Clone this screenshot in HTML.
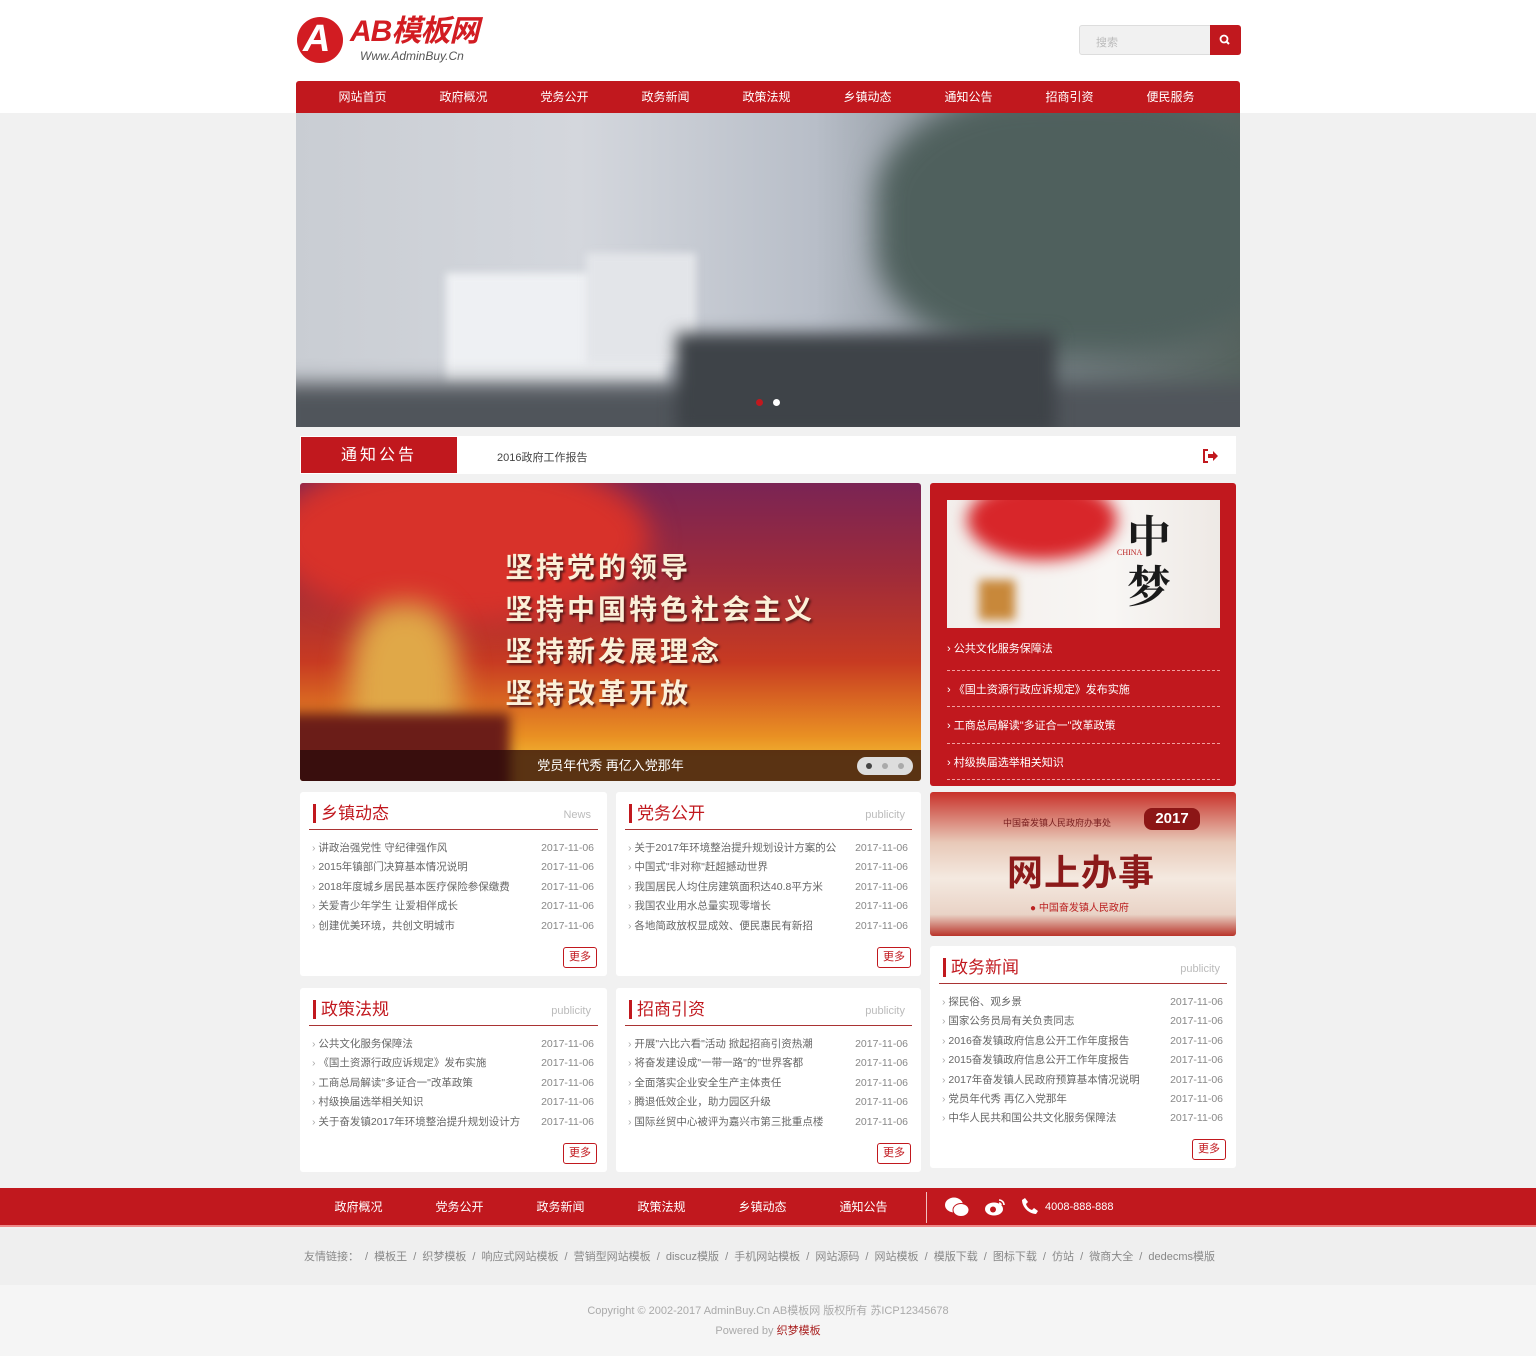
<!DOCTYPE html>
<html><head><meta charset="utf-8">
<style>
*{margin:0;padding:0;box-sizing:border-box}
body{width:1536px;height:1356px;background:#f1f1f1;font-family:"Liberation Sans","Noto Sans CJK SC",sans-serif;position:relative;overflow:hidden;color:#555}
.abs{position:absolute}
.hdr{left:0;top:0;width:1536px;height:113px;background:#fff}
.nav{left:296px;top:81px;width:944px;height:32px;background:#c1181e;border-radius:3px 3px 0 0;display:flex;padding-left:16px}
.nav span{width:101px;text-align:center;color:#fff;font-size:12px;line-height:32px}
.card{background:#fff;border-radius:3px}
.ttl{position:absolute;left:13px;top:12px;font-size:17px;color:#c1181e;border-left:3px solid #c1181e;padding-left:5px;line-height:19px}
.en{position:absolute;right:16px;top:17px;font-size:11px;color:#bbb}
.ul{position:absolute;left:9px;right:9px;top:37px;border-top:1px solid #a33}
.list{position:absolute;left:12px;right:13px;top:47px;font-size:10.5px;color:#666}
.list div{height:19.4px;line-height:19.4px;display:flex;justify-content:space-between;white-space:nowrap;overflow:hidden}
.list div b{font-weight:normal;overflow:hidden}
.list div b:before{content:"› ";color:#aaa}
.list div i{font-style:normal;color:#888;margin-left:6px}
.more{position:absolute;right:10px;bottom:8px;width:34px;height:21px;border:1px solid #c1181e;border-radius:3px;color:#c1181e;font-size:11px;text-align:center;line-height:19px}
.bl{position:absolute;filter:blur(14px)}
</style></head><body>
<div class="abs hdr"></div>
<!-- logo -->
<div class="abs" style="left:297px;top:17px;width:46px;height:46px;border-radius:50%;background:#d21c22"></div>
<div class="abs" style="left:303px;top:14px;color:#fff;font-size:38px;font-weight:bold;font-style:italic;line-height:50px">A</div>
<div class="abs" style="left:350px;top:14px;color:#d21c22;font-size:30px;font-weight:bold;font-style:italic;line-height:36px;letter-spacing:-1px">AB模板网</div>
<div class="abs" style="left:360px;top:49px;color:#555;font-size:12px;font-style:italic">Www.AdminBuy.Cn</div>
<div class="abs" style="left:1079px;top:25px;width:132px;height:30px;background:#f1f1f1;border:1px solid #ddd;border-radius:3px 0 0 3px;font-size:11px;color:#bbb;padding:8px 16px">搜索</div>
<div class="abs" style="left:1210px;top:25px;width:31px;height:30px;background:#c1181e;border-radius:0 3px 3px 0"><svg width="31" height="30"><circle cx="14" cy="14" r="3.5" stroke="#fff" stroke-width="1.8" fill="none"/><line x1="16.5" y1="16.5" x2="19" y2="19" stroke="#fff" stroke-width="2"/></svg></div>
<div class="abs nav"><span>网站首页</span><span>政府概况</span><span>党务公开</span><span>政务新闻</span><span>政策法规</span><span>乡镇动态</span><span>通知公告</span><span>招商引资</span><span>便民服务</span></div>
<!-- banner -->
<div class="abs" style="left:296px;top:113px;width:944px;height:314px;overflow:hidden;background:linear-gradient(90deg,#c9cdd3 0%,#d4d7dd 30%,#b8bec8 55%,#7a848a 75%,#56635f 100%)">
 <div class="bl" style="left:580px;top:-20px;width:400px;height:260px;background:#4f605d;border-radius:40%"></div>
 <div class="bl" style="left:150px;top:160px;width:220px;height:110px;background:#eef0f3;filter:blur(4px)"></div>
 <div class="bl" style="left:290px;top:140px;width:110px;height:110px;background:#e3e5e9;filter:blur(4px)"></div>
 <div class="bl" style="left:-20px;top:270px;width:1000px;height:70px;background:#50555b;filter:blur(10px)"></div>
 <div class="bl" style="left:380px;top:220px;width:380px;height:100px;background:#3e4348;filter:blur(8px)"></div>
 <div class="abs" style="left:460px;top:286px;width:7px;height:7px;border-radius:50%;background:#c1181e"></div>
 <div class="abs" style="left:477px;top:286px;width:7px;height:7px;border-radius:50%;background:#fff"></div>
</div>
<!-- notice -->
<div class="abs" style="left:300px;top:436px;width:936px;height:38px;background:#fff"></div>
<div class="abs" style="left:301px;top:437px;width:156px;height:36px;background:#c1181e;color:#fff;font-size:16px;line-height:38px;text-align:center;letter-spacing:3px">通知公告</div>
<div class="abs" style="left:497px;top:449px;font-size:11px;color:#444">2016政府工作报告</div>
<div class="abs" style="left:1201px;top:448px"><svg width="18" height="16"><path d="M7 2H3v12h4" stroke="#c1181e" stroke-width="2" fill="none"/><path d="M7 6h5V3l5 5-5 5v-3H7z" fill="#c1181e"/></svg></div>
<!-- big image -->
<div class="abs" style="left:300px;top:483px;width:621px;height:298px;border-radius:3px;overflow:hidden;background:linear-gradient(180deg,#7a2454 0%,#9e2b3a 30%,#c73a22 60%,#e99023 85%,#f0b030 92%)">
 <div class="bl" style="left:-30px;top:-30px;width:380px;height:170px;background:#d8322a;border-radius:50%"></div>
 <div class="bl" style="left:50px;top:120px;width:110px;height:180px;background:#e0a848;border-radius:40%"></div>
 <div class="bl" style="left:-20px;top:230px;width:230px;height:90px;background:#6b1d18;filter:blur(6px)"></div>
 <div class="abs" style="left:205px;top:64px;color:#fbf0d8;font-size:28px;font-weight:bold;line-height:42px;letter-spacing:3px;text-shadow:2px 2px 2px #5a1a1a">坚持党的领导<br>坚持中国特色社会主义<br>坚持新发展理念<br>坚持改革开放</div>
 <div class="abs" style="left:0;top:267px;width:621px;height:31px;background:rgba(40,10,10,0.75);color:#fff;font-size:13px;line-height:31px;text-align:center">党员年代秀 再亿入党那年</div>
 <div class="abs" style="left:557px;top:274px;width:56px;height:18px;border-radius:9px;background:#ddd"></div>
 <div class="abs" style="left:566px;top:280px;width:6px;height:6px;border-radius:50%;background:#444"></div>
 <div class="abs" style="left:582px;top:280px;width:6px;height:6px;border-radius:50%;background:#aaa"></div>
 <div class="abs" style="left:598px;top:280px;width:6px;height:6px;border-radius:50%;background:#aaa"></div>
</div>
<!-- right red box -->
<div class="abs" style="left:930px;top:483px;width:306px;height:303px;background:#c1181e;border-radius:3px">
 <div class="abs" style="left:17px;top:17px;width:273px;height:128px;background:linear-gradient(90deg,#f3efec 0%,#f8f6f4 60%,#eee9e5 100%);overflow:hidden">
  <div class="bl" style="left:20px;top:-20px;width:150px;height:80px;border-radius:50%;background:#d8262a;filter:blur(8px)"></div>
  <div class="bl" style="left:32px;top:80px;width:36px;height:40px;background:#c8883a;filter:blur(5px)"></div>
  <div class="abs" style="left:180px;top:8px;font-size:44px;line-height:50px;font-weight:bold;color:#1a1a1a;font-family:'Noto Serif CJK SC',serif">中<br>梦</div>
  <div class="abs" style="left:170px;top:48px;font-size:8px;color:#b22;font-family:'Liberation Serif',serif">CHINA</div>
 </div>
 <div class="abs" style="left:17px;top:151px;width:273px;font-size:11px;color:#fff">
  <div style="height:36.5px;line-height:30px;border-bottom:1px dashed #f0a0a0">› 公共文化服务保障法</div>
  <div style="height:36.5px;line-height:38px;border-bottom:1px dashed #f0a0a0">› 《国土资源行政应诉规定》发布实施</div>
  <div style="height:36.5px;line-height:38px;border-bottom:1px dashed #f0a0a0">› 工商总局解读"多证合一"改革政策</div>
  <div style="height:36.5px;line-height:38px;border-bottom:1px dashed #f0a0a0">› 村级换届选举相关知识</div>
 </div>
</div>
<!-- 网上办事 -->
<div class="abs" style="left:930px;top:792px;width:306px;height:144px;border-radius:3px;overflow:hidden;background:linear-gradient(180deg,#c8322a 0%,#e8c9b8 35%,#f4e9e0 60%,#e9d3c6 85%,#b9342a 100%)">
 <div class="abs" style="left:214px;top:16px;width:56px;height:22px;border-radius:8px;background:#8c1616;color:#fff;font-weight:bold;font-size:15px;line-height:22px;text-align:center">2017</div>
 <div class="abs" style="left:73px;top:24px;font-size:9px;color:#7a2020">中国奋发镇人民政府办事处</div>
 <div class="abs" style="left:77px;top:52px;font-size:36px;font-weight:bold;color:#8c1a1a;letter-spacing:1px">网上办事</div>
 <div class="abs" style="left:100px;top:107px;font-size:10px;color:#b22">● 中国奋发镇人民政府</div>
</div>
<!-- cards -->
<div class="abs card" style="left:300px;top:792px;width:307px;height:184px">
 <div class="ttl">乡镇动态</div><div class="en">News</div><div class="ul"></div>
 <div class="list"><div><b>讲政治强党性 守纪律强作风</b><i>2017-11-06</i></div><div><b>2015年镇部门决算基本情况说明</b><i>2017-11-06</i></div><div><b>2018年度城乡居民基本医疗保险参保缴费</b><i>2017-11-06</i></div><div><b>关爱青少年学生 让爱相伴成长</b><i>2017-11-06</i></div><div><b>创建优美环境，共创文明城市</b><i>2017-11-06</i></div></div>
 <div class="more">更多</div>
</div>
<div class="abs card" style="left:616px;top:792px;width:305px;height:184px">
 <div class="ttl">党务公开</div><div class="en">publicity</div><div class="ul"></div>
 <div class="list"><div><b>关于2017年环境整治提升规划设计方案的公</b><i>2017-11-06</i></div><div><b>中国式"非对称"赶超撼动世界</b><i>2017-11-06</i></div><div><b>我国居民人均住房建筑面积达40.8平方米</b><i>2017-11-06</i></div><div><b>我国农业用水总量实现零增长</b><i>2017-11-06</i></div><div><b>各地简政放权显成效、便民惠民有新招</b><i>2017-11-06</i></div></div>
 <div class="more">更多</div>
</div>
<div class="abs card" style="left:300px;top:988px;width:307px;height:184px">
 <div class="ttl">政策法规</div><div class="en">publicity</div><div class="ul"></div>
 <div class="list"><div><b>公共文化服务保障法</b><i>2017-11-06</i></div><div><b>《国土资源行政应诉规定》发布实施</b><i>2017-11-06</i></div><div><b>工商总局解读"多证合一"改革政策</b><i>2017-11-06</i></div><div><b>村级换届选举相关知识</b><i>2017-11-06</i></div><div><b>关于奋发镇2017年环境整治提升规划设计方</b><i>2017-11-06</i></div></div>
 <div class="more">更多</div>
</div>
<div class="abs card" style="left:616px;top:988px;width:305px;height:184px">
 <div class="ttl">招商引资</div><div class="en">publicity</div><div class="ul"></div>
 <div class="list"><div><b>开展"六比六看"活动 掀起招商引资热潮</b><i>2017-11-06</i></div><div><b>将奋发建设成"一带一路"的"世界客都</b><i>2017-11-06</i></div><div><b>全面落实企业安全生产主体责任</b><i>2017-11-06</i></div><div><b>腾退低效企业，助力园区升级</b><i>2017-11-06</i></div><div><b>国际丝贸中心被评为嘉兴市第三批重点楼</b><i>2017-11-06</i></div></div>
 <div class="more">更多</div>
</div>
<div class="abs card" style="left:930px;top:946px;width:306px;height:222px">
 <div class="ttl">政务新闻</div><div class="en">publicity</div><div class="ul"></div>
 <div class="list"><div><b>探民俗、观乡景</b><i>2017-11-06</i></div><div><b>国家公务员局有关负责同志</b><i>2017-11-06</i></div><div><b>2016奋发镇政府信息公开工作年度报告</b><i>2017-11-06</i></div><div><b>2015奋发镇政府信息公开工作年度报告</b><i>2017-11-06</i></div><div><b>2017年奋发镇人民政府预算基本情况说明</b><i>2017-11-06</i></div><div><b>党员年代秀 再亿入党那年</b><i>2017-11-06</i></div><div><b>中华人民共和国公共文化服务保障法</b><i>2017-11-06</i></div></div>
 <div class="more">更多</div>
</div>
<!-- footer -->
<div class="abs" style="left:0;top:1188px;width:1536px;height:39px;background:#c1181e;border-bottom:2px solid #e88"></div>
<div class="abs" style="left:308px;top:1188px;display:flex;color:#fff;font-size:12px;line-height:39px">
 <span style="width:101px;text-align:center">政府概况</span><span style="width:101px;text-align:center">党务公开</span><span style="width:101px;text-align:center">政务新闻</span><span style="width:101px;text-align:center">政策法规</span><span style="width:101px;text-align:center">乡镇动态</span><span style="width:101px;text-align:center">通知公告</span>
</div>
<div class="abs" style="left:926px;top:1192px;width:1px;height:31px;background:#f0c0c0"></div>
<div class="abs" style="left:944px;top:1196px"><svg width="26" height="22"><ellipse cx="10" cy="9" rx="9" ry="7.5" fill="#fff"/><ellipse cx="17" cy="14" rx="8" ry="6.5" fill="#fff" stroke="#c1181e" stroke-width="1"/></svg></div>
<div class="abs" style="left:984px;top:1197px"><svg width="24" height="20"><ellipse cx="10" cy="12" rx="9" ry="6.5" fill="#fff"/><circle cx="9" cy="12.5" r="3" fill="#c1181e"/><path d="M15 3a5 5 0 0 1 5 5M15 6a2 2 0 0 1 2 2" stroke="#fff" stroke-width="1.6" fill="none"/></svg></div>
<div class="abs" style="left:1021px;top:1197px"><svg width="18" height="18"><path d="M4 1l3 4-2 2c1 3 3 5 6 6l2-2 4 3-2 3C8 17 1 10 1 3z" fill="#fff"/></svg></div>
<div class="abs" style="left:1045px;top:1201px;color:#fff;font-size:11px">4008-888-888</div>
<div class="abs" style="left:0;top:1229px;width:1536px;height:56px;background:#efefef"></div>
<div class="abs" style="left:304px;top:1248px;font-size:11px;color:#888;white-space:nowrap;word-spacing:3px">友情链接： / 模板王 / 织梦模板 / 响应式网站模板 / 营销型网站模板 / discuz模版 / 手机网站模板 / 网站源码 / 网站模板 / 模版下载 / 图标下载 / 仿站 / 微商大全 / dedecms模版</div>
<div class="abs" style="left:0;top:1285px;width:1536px;height:71px;background:#f5f5f5"></div>
<div class="abs" style="left:0;top:1302px;width:1536px;text-align:center;font-size:11px;color:#aaa">Copyright © 2002-2017 AdminBuy.Cn AB模板网 版权所有 苏ICP12345678</div>
<div class="abs" style="left:0;top:1322px;width:1536px;text-align:center;font-size:11px;color:#aaa">Powered by <span style="color:#a22">织梦模板</span></div>
</body></html>
